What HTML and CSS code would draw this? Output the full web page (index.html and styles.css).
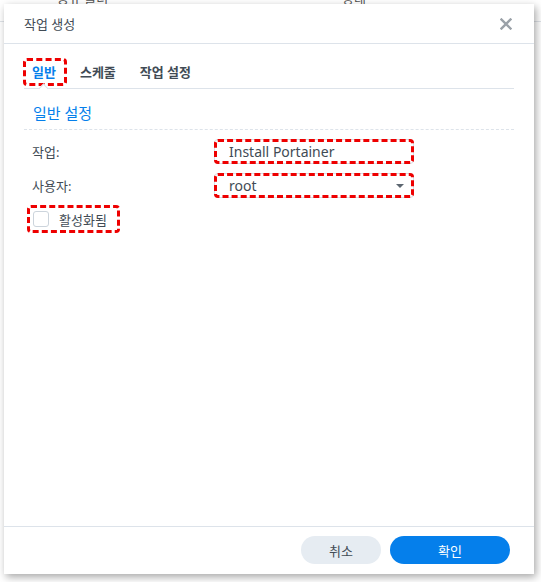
FILE: index.html
```html
<!DOCTYPE html>
<html lang="ko">
<head>
    <meta charset="UTF-8">
    <meta name="viewport" content="width=device-width, initial-scale=1.0">
    <title>작업 생성</title>
    <link rel="stylesheet" href="styles.css">
</head>
<body>
    <div class="backdrop">
        <span class="back-col first">공유 폴더</span>
        <span class="back-col second">상태</span>
    </div>

    <div class="dialog">
        <div class="dialog-header">
            <span class="dialog-title">작업 생성</span>
            <span class="close">
                <svg width="12" height="12" viewBox="0 0 12 12">
                    <path d="M1.5 1.5 L10.5 10.5 M10.5 1.5 L1.5 10.5" stroke="#9aa1a8" stroke-width="2.4" stroke-linecap="square"/>
                </svg>
            </span>
        </div>

        <div class="dialog-body">
            <div class="tabs">
                <span class="tab active mark">일반</span>
                <span class="tab">스케줄</span>
                <span class="tab">작업 설정</span>
            </div>

            <h2 class="section-title">일반 설정</h2>

            <div class="form-row">
                <label class="form-label">작업:</label>
                <div class="field mark">Install Portainer</div>
            </div>
            <div class="form-row">
                <label class="form-label">사용자:</label>
                <div class="field select mark">
                    root
                    <span class="caret"></span>
                </div>
            </div>
            <div class="check-row">
                <label class="check mark">
                    <span class="check-box"></span>
                    활성화됨
                </label>
            </div>
        </div>

        <div class="dialog-footer">
            <button class="btn btn-cancel">취소</button>
            <button class="btn btn-ok">확인</button>
        </div>
    </div>
</body>
</html>
```

FILE: styles.css
```css
* {
    box-sizing: border-box;
}
body {
    margin: 0;
    height: 582px;
    overflow: hidden;
    background-color: #fff;
    font-family: "Noto Sans", "Noto Sans CJK KR", sans-serif;
    color: #414b55;
}
.backdrop {
    height: 22px;
    border-bottom: 1px solid #dfe3e8;
    position: relative;
}
.back-col {
    position: absolute;
    top: -12px;
    font-size: 13px;
    color: #555;
}
.back-col.first {
    left: 57px;
}
.back-col.second {
    left: 342px;
}
.dialog {
    position: absolute;
    top: 4px;
    left: 4px;
    width: 530px;
    height: 570px;
    background-color: #fff;
    box-shadow: 2px 3px 8px rgba(0,0,0,0.35);
    display: flex;
    flex-direction: column;
}
.dialog-header {
    height: 40px;
    border-bottom: 1px solid #dde3ea;
    display: flex;
    align-items: center;
    justify-content: space-between;
    padding: 0 22px 0 20px;
}
.dialog-title {
    font-size: 13px;
    color: #414b55;
}
.close {
    display: flex;
    margin-top: 1px;
}
.dialog-body {
    flex: 1;
    padding: 0 20px;
}
.tabs {
    display: flex;
    gap: 4px;
    margin-top: 14px;
    height: 31px;
    border-bottom: 1px solid #dde3ea;
}
.tab {
    font-size: 13px;
    font-weight: 600;
    color: #414b55;
    padding: 4px 11px 0 9px;
    height: 28px;
}
.tab.active {
    color: #057feb;
    margin-left: -1px;
    position: relative;
}
.tab.active::after {
    content: "";
    position: absolute;
    left: 17px;
    bottom: -6px;
    width: 6px;
    height: 6px;
    background-color: #fff;
    border-left: 1px solid #dde3ea;
    border-top: 1px solid #dde3ea;
    transform: rotate(45deg);
}
.mark {
    outline: 3px dashed #ee0000;
    outline-offset: -3px;
    border-radius: 4px;
}
.section-title {
    margin: 13px 0 0;
    padding: 0 0 6px 9px;
    font-size: 15px;
    font-weight: normal;
    color: #057feb;
    border-bottom: 1px dashed #dde3ea;
}
.form-row {
    display: flex;
    align-items: center;
    margin-top: 9px;
}
.form-row + .form-row {
    margin-top: 9px;
}
.form-label {
    width: 190px;
    padding-left: 8px;
    font-size: 13px;
    color: #414b55;
}
.field {
    width: 200px;
    height: 25px;
    line-height: 23px;
    padding: 0 8px 0 14px;
    font-size: 14px;
    color: #414b55;
    border: 1px solid #d7dfe7;
    position: relative;
}
.caret {
    position: absolute;
    right: 9px;
    top: 10px;
    width: 0;
    height: 0;
    border-left: 4px solid transparent;
    border-right: 4px solid transparent;
    border-top: 4px solid #5c6670;
}
.check-row {
    margin-top: 7px;
    padding-left: 3px;
}
.check {
    display: inline-flex;
    align-items: center;
    gap: 10px;
    height: 28px;
    padding: 0 13px 0 6px;
    font-size: 13px;
    color: #414b55;
}
.check-box {
    width: 16px;
    height: 16px;
    border: 1px solid #ccd4dc;
    border-radius: 3px;
    background-color: #fff;
}
.dialog-footer {
    height: 48px;
    border-top: 1px solid #dde3ea;
    display: flex;
    justify-content: flex-end;
    align-items: flex-start;
    gap: 9px;
    padding: 9px 24px 0 0;
}
.btn {
    height: 28px;
    border: none;
    border-radius: 14px;
    font-family: "Noto Sans", "Noto Sans CJK KR", sans-serif;
    font-size: 13px;
    cursor: pointer;
}
.btn-cancel {
    width: 80px;
    background-color: #e6ecf2;
    color: #414b55;
}
.btn-ok {
    width: 120px;
    background-color: #057feb;
    color: #fff;
}
```
